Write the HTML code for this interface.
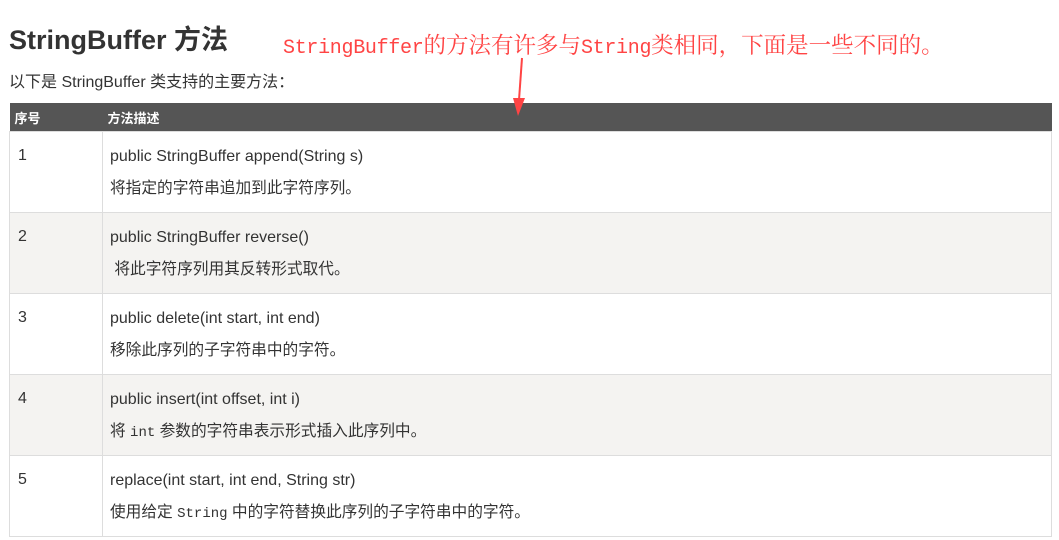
<!DOCTYPE html><html><head><meta charset="utf-8"><style>
body{margin:0;background:#fff;width:1059px;height:540px;overflow:hidden;font-family:"Liberation Sans","Noto Sans CJK SC",sans-serif;color:#333;position:relative}
h1{position:absolute;left:9px;top:22px;margin:0;font-size:27px;font-weight:bold;color:#333;line-height:36px}
.note{position:absolute;left:283px;top:30px;font-family:"Liberation Mono","Noto Serif CJK SC",monospace;font-size:20px;color:#f44;line-height:28px;white-space:nowrap;letter-spacing:-0.3px}
.note span{font-family:"Noto Serif CJK SC",serif;font-size:22.5px;letter-spacing:0}
.intro{position:absolute;left:9px;top:72px;font-size:16px;line-height:22px}
table{position:absolute;left:9px;top:103px;width:1043px;border-collapse:collapse;font-size:16px;table-layout:fixed}
th{background:#555;color:#fff;text-align:left;height:28px;padding:0 0 0 5px;font-size:13px}
td{border:1px solid #ddd;vertical-align:top;height:81px;padding:0;box-sizing:border-box}
tr.g td{background:#f4f3f1}
td.n{padding:15px 0 0 8px}
td.d{padding:14px 0 0 7px}
td.d div{line-height:22px}
td.d div+div{margin-top:10px;font-size:15.7px}
code{font-family:"Liberation Mono",monospace;font-size:14px}
</style></head><body>
<h1>StringBuffer 方法</h1>
<div class="note">StringBuffer<span>的方法有许多与</span>String<span>类相同，下面是一些不同的。</span></div>
<div class="intro">以下是 StringBuffer 类支持的主要方法：</div>
<table>
<colgroup><col style="width:93px"><col></colgroup>
<tr><th>序号</th><th>方法描述</th></tr>
<tr><td class="n">1</td><td class="d"><div>public StringBuffer append(String s)</div><div>将指定的字符串追加到此字符序列。</div></td></tr>
<tr class="g"><td class="n">2</td><td class="d"><div>public StringBuffer reverse()</div><div>&nbsp;将此字符序列用其反转形式取代。</div></td></tr>
<tr><td class="n">3</td><td class="d"><div>public delete(int start, int end)</div><div>移除此序列的子字符串中的字符。</div></td></tr>
<tr class="g"><td class="n">4</td><td class="d"><div>public insert(int offset, int i)</div><div>将 <code>int</code> 参数的字符串表示形式插入此序列中。</div></td></tr>
<tr><td class="n">5</td><td class="d"><div>replace(int start, int end, String str)</div><div>使用给定 <code>String</code> 中的字符替换此序列的子字符串中的字符。</div></td></tr>
</table>
<svg style="position:absolute;left:0;top:0" width="1059" height="540"><line x1="522" y1="58" x2="519" y2="100" stroke="#f44" stroke-width="2"/><polygon points="513,98 525,98 518,116" fill="#f44"/></svg>
</body></html>
